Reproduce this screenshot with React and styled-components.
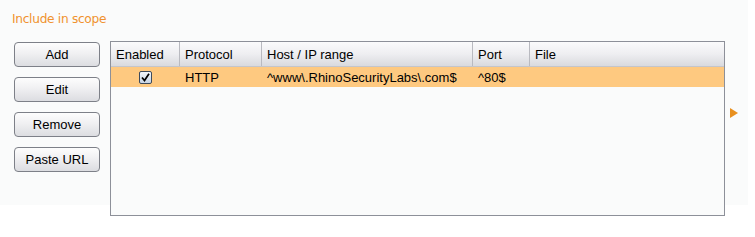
import React from "react";
import styled, { createGlobalStyle } from "styled-components";

const GlobalStyle = createGlobalStyle`
  html, body {
    margin: 0;
    padding: 0;
    background: #ffffff;
    font-family: "Liberation Sans", Arial, sans-serif;
  }
`;

const columns = [
  { key: "enabled", label: "Enabled", width: 69 },
  { key: "protocol", label: "Protocol", width: 82 },
  { key: "host", label: "Host / IP range", width: 211 },
  { key: "port", label: "Port", width: 57 },
  { key: "file", label: "File", width: 193 },
];

const rows = [
  {
    enabled: true,
    protocol: "HTTP",
    host: "^www\\.RhinoSecurityLabs\\.com$",
    port: "^80$",
    file: "",
  },
];

const App = () => {
  return (
    <>
      <GlobalStyle />
      <Page>
        <Panel>
          <Title>Include in scope</Title>
          <Body>
            <ButtonColumn>
              <Button>Add</Button>
              <Button>Edit</Button>
              <Button>Remove</Button>
              <Button>Paste URL</Button>
            </ButtonColumn>
            <Table>
              <HeaderRow>
                {columns.map((c) => (
                  <HeaderCell key={c.key} style={{ width: c.width }}>
                    {c.label}
                  </HeaderCell>
                ))}
              </HeaderRow>
              {rows.map((r, i) => (
                <DataRow key={i} selected>
                  {columns.map((c) => (
                    <DataCell
                      key={c.key}
                      style={{ width: c.width }}
                      center={c.key === "enabled"}
                    >
                      {c.key === "enabled" ? (
                        <CheckBox>
                          {r.enabled && (
                            <svg width="9" height="9" viewBox="0 0 9 9">
                              <path
                                d="M1 4.5 L3.5 7.5 L8 0.8"
                                fill="none"
                                stroke="#000"
                                strokeWidth="1.7"
                              />
                            </svg>
                          )}
                        </CheckBox>
                      ) : (
                        r[c.key]
                      )}
                    </DataCell>
                  ))}
                </DataRow>
              ))}
            </Table>
            <Expander>
              <svg width="8" height="10" viewBox="0 0 8 10">
                <path d="M0 0 L8 5 L0 10 Z" fill="#e8901f" />
              </svg>
            </Expander>
          </Body>
        </Panel>
      </Page>
    </>
  );
};

const Page = styled.div`
  width: 755px;
  height: 237px;
  background: #ffffff;
`;

const Panel = styled.div`
  width: 748px;
  height: 205px;
  background: #fafbfb;
  box-sizing: border-box;
  padding: 12px 0 0 12px;
`;

const Title = styled.div`
  color: #f0922e;
  font-family: "DejaVu Sans", Tahoma, sans-serif;
  font-size: 12.2px;
  letter-spacing: -0.3px;
  height: 17px;
  line-height: 15px;
`;

const Body = styled.div`
  display: flex;
  margin-top: 12px;
`;

const ButtonColumn = styled.div`
  display: flex;
  flex-direction: column;
  gap: 10px;
  padding: 1px 0 0 2px;
  width: 96px;
`;

const Button = styled.div`
  width: 86px;
  height: 25px;
  box-sizing: border-box;
  border: 1px solid #7d8088;
  border-radius: 4px;
  background: linear-gradient(#fdfdfd 0%, #f0f0f2 45%, #dcdde1 100%);
  display: flex;
  align-items: center;
  justify-content: center;
  font-size: 13px;
  color: #000;
`;

const Table = styled.div`
  width: 615px;
  height: 175px;
  box-sizing: border-box;
  border: 1px solid #8d9099;
  background: #fafbfb;
  display: flex;
  flex-direction: column;
  flex-shrink: 0;
`;

const HeaderRow = styled.div`
  display: flex;
  height: 24px;
  background: linear-gradient(#fbfbfc 0%, #eeeef1 50%, #d9dade 100%);
  border-bottom: 1px solid #c4c5cb;
`;

const HeaderCell = styled.div`
  box-sizing: border-box;
  padding-left: 5px;
  display: flex;
  align-items: center;
  font-size: 13px;
  color: #000;
  border-right: 1px solid #b9bac0;
  &:last-child {
    border-right: none;
    flex: 1;
  }
`;

const DataRow = styled.div`
  display: flex;
  height: 20px;
  background: ${(p) => (p.selected ? "#fec980" : "transparent")};
`;

const DataCell = styled.div`
  box-sizing: border-box;
  padding-left: ${(p) => (p.center ? "0" : "5px")};
  display: flex;
  align-items: center;
  justify-content: ${(p) => (p.center ? "center" : "flex-start")};
  font-size: 13px;
  color: #000;
  &:last-child {
    flex: 1;
  }
`;

const CheckBox = styled.div`
  width: 13px;
  height: 13px;
  box-sizing: border-box;
  border: 1px solid #3c4a5c;
  border-radius: 2px;
  background: linear-gradient(#f2f6fb, #c7d4e4);
  display: flex;
  align-items: center;
  justify-content: center;
`;

const Expander = styled.div`
  margin: 67px 0 0 5px;
  height: 10px;
  display: flex;
`;

export default App;
